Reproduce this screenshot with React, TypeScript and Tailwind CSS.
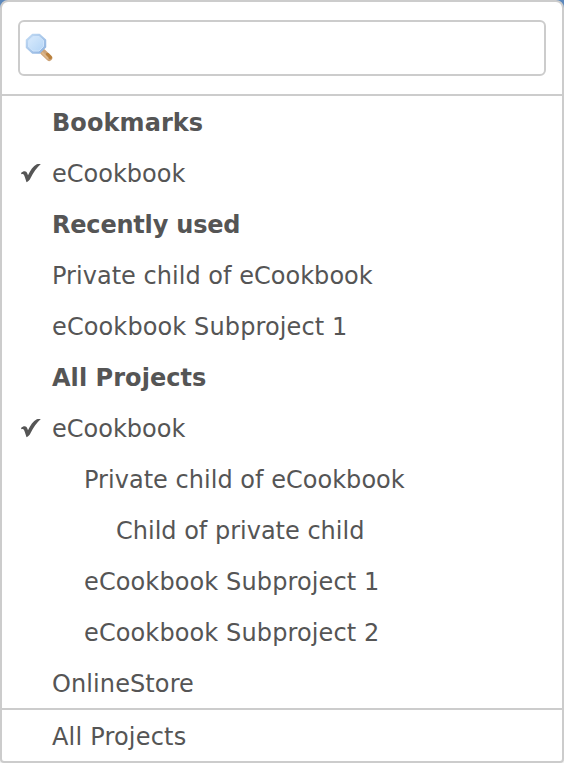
type Item = {
  label: string
  kind?: "heading"
  checked?: boolean
  className?: string
}

const items: Item[] = [
  { label: "Bookmarks", kind: "heading", className: "tracking-[0.08px]" },
  { label: "eCookbook", checked: true },
  { label: "Recently used", kind: "heading", className: "tracking-[-0.2px]" },
  { label: "Private child of eCookbook", className: "tracking-[0.03px]" },
  { label: "eCookbook Subproject 1", className: "tracking-[0.12px]" },
  { label: "All Projects", kind: "heading", className: "tracking-[0.05px]" },
  { label: "eCookbook", checked: true },
  { label: "Private child of eCookbook", className: "pl-8 tracking-[0.03px]" },
  { label: "Child of private child", className: "pl-16" },
  { label: "eCookbook Subproject 1", className: "pl-8 tracking-[0.12px]" },
  { label: "eCookbook Subproject 2", className: "pl-8 tracking-[0.12px]" },
  { label: "OnlineStore", className: "tracking-[0.1px]" },
]

function CheckIcon() {
  return (
    <svg viewBox="0 0 20 20" className="mb-0.5 w-5 h-5 fill-[#555]">
      <path d="M0.2 9.8C1.8 8.2 4.3 7.7 5.5 9.1C6.2 10 6.5 11.2 7 12.2C9.3 7.4 12.2 3 15.8 1.3C17 0.8 18.4 0.8 19.8 1C15.7 4.7 12.4 9.6 9.6 15C8.6 17 7.5 18.5 5.5 19.3C4.9 17.2 4 14.1 3 12C2.4 10.8 1.5 10.9 0.2 11.3Z" />
    </svg>
  )
}

function SearchIcon() {
  return (
    <svg viewBox="0 0 32 32" className="w-8 h-8">
      <defs>
        <linearGradient id="lens" x1="0" y1="0" x2="1" y2="1">
          <stop offset="0" stopColor="#d8eafc" />
          <stop offset="1" stopColor="#b4d5f6" />
        </linearGradient>
        <linearGradient id="rim" x1="0" y1="0" x2="1" y2="1">
          <stop offset="0" stopColor="#c3dcf5" />
          <stop offset="1" stopColor="#8eb2df" />
        </linearGradient>
      </defs>
      <path d="M19 20L25.3 26" stroke="#cda377" strokeWidth="6" strokeLinecap="round" />
      <path d="M23.5 22.5L26.3 25.5" stroke="#b9803c" strokeWidth="3.5" strokeLinecap="round" />
      <path d="M18.5 21L23.5 26" stroke="#dcb78b" strokeWidth="2" strokeLinecap="round" />
      <path d="M8.5 2.5H15.5L21.5 8V15L15.5 21H8.5L2.5 15.5V8Z" fill="url(#rim)" stroke="url(#rim)" strokeWidth="1.5" strokeLinejoin="round" />
      <path d="M9 4.5H15L19.5 8.5V14.5L15 19H9L4.5 15V8.5Z" fill="url(#lens)" stroke="#cfe4fb" strokeLinejoin="round" />
    </svg>
  )
}

export default function App() {
  return (
    <div className="bg-linear-to-b from-[#5b88bd] from-50% to-[#f4f4f4] to-50%">
      <div className="flex h-[763px] w-[564px] flex-col rounded-t-lg rounded-b border-2 border-[#ccc] bg-white font-['DejaVu_Sans',sans-serif] text-2xl text-[#555]">
        <div className="border-b-2 border-[#ccc] px-4 py-[18px]">
          <label className="flex h-14 items-center rounded-md border-2 border-[#ccc] pl-1">
            <SearchIcon />
            <input type="text" className="ml-2 min-w-0 flex-1 outline-none" />
          </label>
        </div>
        <ul>
          {items.map((item, i) => (
            <li key={i} className="flex h-[51px] items-center pt-0.5 whitespace-nowrap">
              <span className="w-[50px] shrink-0 pl-[19px]">{item.checked && <CheckIcon />}</span>
              <span className={`${item.kind === "heading" ? "font-bold" : ""} ${item.className ?? ""}`}>
                {item.label}
              </span>
            </li>
          ))}
        </ul>
        <div className="flex h-[53px] items-center border-t-2 border-[#ccc] pt-0.5 pl-[50px] tracking-[0.2px]">
          All Projects
        </div>
      </div>
    </div>
  )
}
